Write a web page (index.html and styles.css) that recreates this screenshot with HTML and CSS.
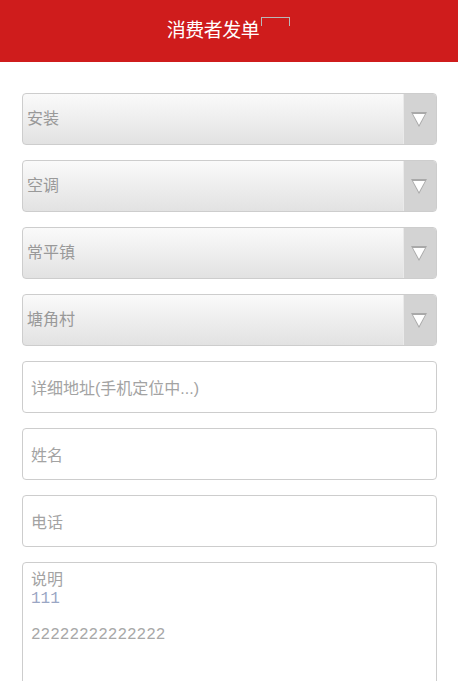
FILE: index.html
```html
<!DOCTYPE html>
<html lang="zh-CN">
<head>
  <meta charset="UTF-8" />
  <meta name="viewport" content="width=device-width, initial-scale=1" />
  <title>消费者发单</title>
  <link rel="stylesheet" href="styles.css">
</head>
<body>

  <header class="topbar">
    <h1>消费者发单<span class="title-img"></span></h1>
  </header>

  <form class="order-form">
    <div class="select-box"><span>安装</span><i class="arrow"></i></div>
    <div class="select-box"><span>空调</span><i class="arrow"></i></div>
    <div class="select-box"><span>常平镇</span><i class="arrow"></i></div>
    <div class="select-box"><span>塘角村</span><i class="arrow"></i></div>

    <div class="field">详细地址(手机定位中...)</div>
    <div class="field">姓名</div>
    <div class="field">电话</div>

    <div class="field memo">
      <div class="memo-label">说明</div>
      <div class="mono blue">111</div>
      <div class="mono">&nbsp;</div>
      <div class="mono">22222222222222</div>
    </div>
  </form>

</body>
</html>
```

FILE: styles.css
```css
body { margin: 0; font-family: "Liberation Sans", "Noto Sans CJK SC", sans-serif; background: #fff; }

.topbar { background: #cf1c1c; height: 62px; display: flex; align-items: center; justify-content: center; }
.topbar h1 { margin: 0; color: #fff; font-size: 19px; font-weight: normal; position: relative; left: -16px; top: -3px; letter-spacing: -0.5px; }
.title-img {
  position: absolute; left: 100%; top: 2px; margin-left: 2px;
  width: 27px; height: 8px;
  border: 1px solid #b8b8b8; border-bottom: none;
}

.order-form { padding: 31px 21px 0 22px; display: flex; flex-direction: column; gap: 15px; }

.select-box {
  height: 50px; border: 1px solid #cdcdcd; border-radius: 4px;
  background: linear-gradient(#fafafa, #e2e2e2);
  display: flex; align-items: center; justify-content: space-between;
  color: #999; font-size: 16px; overflow: hidden;
}
.select-box span { padding-left: 4px; margin-top: -4px; }
.arrow {
  width: 32px; height: 100%; background: #d3d3d3;
  border-left: 1px solid #eaeaea;
  position: relative;
}
.arrow::before {
  content: ""; position: absolute; left: 7px; top: 18px;
  border-left: 8px solid transparent; border-right: 8px solid transparent;
  border-top: 15px solid #a9a9a9;
}
.arrow::after {
  content: ""; position: absolute; left: 9px; top: 20px;
  border-left: 6px solid transparent; border-right: 6px solid transparent;
  border-top: 11px solid #fff;
}

.field {
  height: 50px; border: 1px solid #cdcdcd; border-radius: 4px;
  display: flex; align-items: center; padding-left: 8px;
  color: #a3a3a3; font-size: 16px;
}

.memo { display: block; height: 140px; padding-top: 7px; }
.memo-label { line-height: 20px; }
.mono { font-family: "Liberation Mono", monospace; font-size: 16px; line-height: 18px; color: #a8a8a8; }
.mono.blue { color: #9aa6c4; }
```
